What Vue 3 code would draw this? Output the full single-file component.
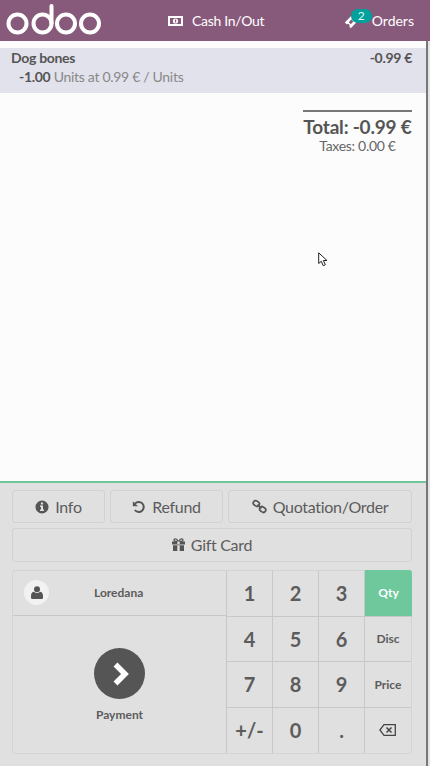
<script setup>
const topButtons = [
  { label: 'Info', icon: 'info', cls: 'b-info' },
  { label: 'Refund', icon: 'undo', cls: 'b-refund' },
  { label: 'Quotation/Order', icon: 'link', cls: 'b-quote' },
]
const keys = [
  { t: '1', c: 'num' }, { t: '2', c: 'num' }, { t: '3', c: 'num' }, { t: 'Qty', c: 'mode active' },
  { t: '4', c: 'num' }, { t: '5', c: 'num' }, { t: '6', c: 'num' }, { t: 'Disc', c: 'mode' },
  { t: '7', c: 'num' }, { t: '8', c: 'num' }, { t: '9', c: 'num' }, { t: 'Price', c: 'mode' },
  { t: '+/-', c: 'num' }, { t: '0', c: 'num' }, { t: '.', c: 'num' }, { t: '', c: 'mode back' },
]
</script>

<template>
  <div class="screen">
    <header class="topbar">
      <svg class="logo" width="104" height="41" viewBox="0 0 104 41" fill="none" stroke="#fff" stroke-width="4">
        <circle cx="17.5" cy="23.5" r="9" />
        <circle cx="42.5" cy="23.5" r="9" />
        <path d="M51.5 23.5V6" stroke-linecap="round" />
        <circle cx="66" cy="23.5" r="9" />
        <circle cx="90" cy="23.5" r="9" />
      </svg>
      <div class="cash">
        <svg width="15" height="10" viewBox="0 0 15 10">
          <path fill="#fff" fill-rule="evenodd" d="M0 0h15v10H0zM2 2v6h11V2zM7.5 2.400a2.600 2.600 0 1 1 0 5.200 2.600 2.600 0 0 1 0-5.200z" />
          <rect x="7" y="3.500" width="1.200" height="3" fill="#875a7b" />
        </svg>
        <span>Cash In/Out</span>
      </div>
      <div class="orders">
        <span class="ticket-wrap">
          <svg class="ticket" width="14" height="14" viewBox="0 0 14 14">
            <path fill="#fff" fill-rule="evenodd" d="M7.400.8 13.200 6.600 6.800 13.200 5.200 11.600a1.500 1.500 0 0 0-2.200-2.200L.8 7.400zM7.400 4.600 4.800 7.300 6.800 9.300 9.400 6.600z" />
          </svg>
          <span class="badge">2</span>
        </span>
        <span class="orders-label">Orders</span>
      </div>
    </header>
    <div class="body">
      <main class="main">
        <section class="order">
          <div class="line">
            <div class="line-head">
              <span>Dog bones</span>
              <span>-0.99 €</span>
            </div>
            <div class="line-info"><b>-1.00</b> Units at 0.99 € / Units</div>
          </div>
          <div class="summary">
            <div class="total">Total: -0.99 €</div>
            <div class="taxes">Taxes: 0.00 €</div>
          </div>
        </section>
        <section class="controls">
          <div class="row">
            <button v-for="b in topButtons" :key="b.label" class="btn" :class="b.cls">
              <svg v-if="b.icon === 'info'" width="14" height="14" viewBox="0 0 14 14">
                <path fill="#555" fill-rule="evenodd" d="M7 .5a6.500 6.500 0 1 1 0 13 6.500 6.500 0 0 1 0-13zM5.900 2.600v2h2.200v-2zM5 5.600v1.300h1v2.600H5v1.400h4V9.500H8V5.600z" />
              </svg>
              <svg v-else-if="b.icon === 'undo'" width="14" height="14" viewBox="0 0 14 14" fill="none">
                <path stroke="#555" stroke-width="2" d="M3 3.600A5 5 0 1 1 2.800 10" />
                <path fill="#555" d="M.8 1.200 6 6.200H.8z" />
              </svg>
              <svg v-else width="15" height="15" viewBox="0 0 15 15" fill="none" stroke="#555" stroke-width="1.700">
                <rect x="1.100" y="2.100" width="6.400" height="4.800" rx="2.400" transform="rotate(35 4.300 4.500)" />
                <rect x="7.500" y="8.100" width="6.400" height="4.800" rx="2.400" transform="rotate(35 10.700 10.500)" />
                <path d="M5.500 5.700 9.500 9.300" />
              </svg>
              <span>{{ b.label }}</span>
            </button>
          </div>
          <button class="btn gift">
            <svg width="13" height="13" viewBox="0 0 13 13">
              <path fill="#555" fill-rule="evenodd" d="M0 3.600h13v3H0zM1 7.300h11V13H1zM5.300 3.600h2.400V13H5.300zM3.400.2c1.300 0 2.400 1 3.100 2.600C7.200 1.200 8.300.2 9.600.2c1.200 0 2 .8 2 1.800S10.800 3.600 9.800 3.600H3.200C2.200 3.600 1.400 3 1.400 2S2.200.2 3.400.2zM3.400 1.400c-.5 0-.8.300-.8.700s.3.600.8.600h1.700C4.600 1.900 4 1.400 3.400 1.400zM9.600 1.400c-.6 0-1.200.5-1.700 1.300h1.700c.5 0 .8-.2.800-.6s-.3-.7-.8-.7z" />
            </svg>
            <span>Gift Card</span>
          </button>
          <div class="pad">
            <div class="left">
              <div class="customer">
                <span class="avatar">
                  <svg width="12" height="13" viewBox="0 0 12 13">
                    <circle cx="6" cy="3.200" r="3" fill="#555" />
                    <path fill="#555" d="M0 10c0-3 1.500-4 3-4.200.8.800 1.800 1.200 3 1.200s2.200-.4 3-1.200C10.500 6 12 7 12 10v1.400c0 .9-.7 1.600-1.600 1.600H1.600C.7 13 0 12.300 0 11.400z" />
                  </svg>
                </span>
                <span class="customer-name">Loredana</span>
              </div>
              <div class="payment">
                <span class="pay-circle">
                  <svg class="chev" width="18" height="24" viewBox="0 0 18 24" fill="none">
                    <path stroke="#fff" stroke-width="5.500" d="M3.500 2.500 13 12 3.500 21.500" />
                  </svg>
                </span>
                <span class="pay-label">Payment</span>
              </div>
            </div>
            <div class="keys">
              <button v-for="(k, i) in keys" :key="i" class="key" :class="k.c">
                <svg v-if="k.c.includes('back')" class="back-icon" width="17" height="12" viewBox="0 0 17 12" fill="none" stroke="#444" stroke-width="1.300">
                  <path d="M5 .7H16.300V11.300H5L.9 6z" />
                  <path d="M7.500 3.500l5 5M12.500 3.500l-5 5" stroke-width="1.500" />
                </svg>
                <template v-else>{{ k.t }}</template>
              </button>
            </div>
          </div>
        </section>
      </main>
      <div class="divider"></div>
      <div class="rest"></div>
    </div>
    <svg class="cursor" width="11" height="15" viewBox="0 0 11 15">
      <path fill="#fff" stroke="#222" stroke-width="1" d="M.7.8V11.500L3.300 9.300 5.200 13.700 7.300 12.800 5.400 8.500H9z" />
    </svg>
  </div>
</template>

<style>
html, body { margin: 0; padding: 0; }
</style>

<style scoped>
.screen {
  position: relative;
  width: 430px;
  height: 766px;
  display: flex;
  flex-direction: column;
  overflow: hidden;
  font-family: Lato, "Liberation Sans", sans-serif;
  color: #555;
  background: #fff;
}
.topbar {
  flex: 0 0 41px;
  height: 41px;
  background: #875a7b;
  color: #fff;
  display: flex;
  align-items: center;
  font-size: 14px;
  letter-spacing: -0.3px;
}
.logo { flex: none; }
.cash {
  margin-left: 64px;
  display: flex;
  align-items: center;
  gap: 9px;
}
.orders {
  margin-left: auto;
  margin-right: 16px;
  display: flex;
  align-items: center;
}
.orders-label { letter-spacing: 0; }
.ticket-wrap {
  position: relative;
  width: 28px;
  height: 14px;
  margin-top: 2px;
}
.ticket { position: absolute; left: 0; top: 0; }
.badge {
  position: absolute;
  left: 7px;
  top: -6px;
  width: 21px;
  height: 14px;
  border-radius: 7px;
  background: #00a09d;
  color: #e4f5f4;
  font-size: 12px;
  line-height: 14px;
  letter-spacing: 0;
  text-align: center;
}
.body {
  flex: 1;
  min-height: 0;
  display: flex;
}
.main {
  width: 426px;
  display: flex;
  flex-direction: column;
}
.divider { width: 2px; background: #777; }
.rest { width: 2px; background: #e4e4e4; }
.order {
  flex: 1;
  background: #fcfcfc;
  padding-top: 7px;
  border-bottom: 2px solid #6ec89b;
}
.line {
  height: 45px;
  box-sizing: border-box;
  background: #e2e2ec;
  padding: 1px 14px 0 11px;
  font-size: 14px;
  line-height: 18px;
  letter-spacing: -0.3px;
}
.line-head {
  display: flex;
  justify-content: space-between;
  font-weight: 700;
}
.line-info {
  margin: 1px 0 0 8px;
  color: #888;
}
.line-info b { color: #555; }
.summary {
  margin: 17px 14px 0 auto;
  width: 109px;
  border-top: 2px solid #777;
  padding-top: 4px;
  text-align: center;
}
.total {
  font-size: 19px;
  font-weight: 700;
  line-height: 22px;
  letter-spacing: -0.2px;
  white-space: nowrap;
}
.taxes {
  font-size: 14px;
  line-height: 16px;
  letter-spacing: -0.3px;
  color: #666;
}
.controls {
  flex: 0 0 283px;
  height: 283px;
  box-sizing: border-box;
  background: #e0e0e0;
  padding: 7px 14px 0 12px;
  display: flex;
  flex-direction: column;
}
.row {
  display: flex;
  gap: 5px;
}
.btn {
  height: 33px;
  box-sizing: border-box;
  padding: 0;
  border: 1px solid #d2d2d2;
  border-radius: 3px;
  background: #e0e0e0;
  color: #5c5c5c;
  font-family: inherit;
  font-size: 16px;
  letter-spacing: -0.3px;
  display: flex;
  align-items: center;
  justify-content: center;
  gap: 6px;
}
.b-info { width: 93px; }
.b-refund { width: 113px; }
.b-quote { width: 184px; }
.gift {
  height: 34px;
  margin-top: 5px;
  padding-bottom: 1px;
}
.pad {
  margin-top: 8px;
  height: 184px;
  display: flex;
  border: 1px solid #d4d4d4;
  border-radius: 3px;
  box-sizing: border-box;
}
.left {
  width: 214px;
  box-sizing: border-box;
  display: flex;
  flex-direction: column;
  border-right: 1px solid #c8c8c8;
}
.customer {
  height: 45px;
  flex: none;
  box-sizing: border-box;
  border-bottom: 1px solid #c8c8c8;
  display: flex;
  align-items: center;
  padding: 0 0 2px 11px;
}
.avatar {
  width: 25px;
  height: 25px;
  border-radius: 50%;
  background: #f2f2f2;
  display: flex;
  align-items: center;
  justify-content: center;
}
.customer-name {
  margin-left: 45px;
  font-size: 12px;
  font-weight: 700;
  color: #5c5c5c;
}
.payment {
  flex: 1;
  display: flex;
  flex-direction: column;
  align-items: center;
  padding-top: 32px;
}
.pay-circle {
  width: 51px;
  height: 51px;
  border-radius: 50%;
  background: #555;
  display: flex;
  align-items: center;
  justify-content: center;
}
.chev { margin-left: 3px; }
.pay-label {
  margin-top: 8px;
  font-size: 12px;
  line-height: 16px;
  font-weight: 700;
  color: #5c5c5c;
}
.keys {
  flex: 1;
  display: grid;
  grid-template-columns: repeat(4, 1fr);
  grid-template-rows: repeat(4, 1fr);
}
.key {
  padding: 0;
  border: 0;
  border-right: 1px solid #c8c8c8;
  border-bottom: 1px solid #c8c8c8;
  background: transparent;
  color: #5c5c5c;
  font-family: inherit;
  display: flex;
  align-items: center;
  justify-content: center;
}
.key:nth-child(4n) { border-right: 0; }
.key:nth-child(n + 13) { border-bottom: 0; }
.num {
  font-size: 20px;
  font-weight: 700;
}
.mode {
  font-size: 12px;
  font-weight: 700;
}
.active {
  background: #6ec89b;
  color: #fff;
  border-radius: 0 3px 0 0;
  margin: -1px -1px 0 0;
}
.back-icon { margin-right: 1px; }
.cursor {
  position: absolute;
  left: 318px;
  top: 252px;
}
</style>
